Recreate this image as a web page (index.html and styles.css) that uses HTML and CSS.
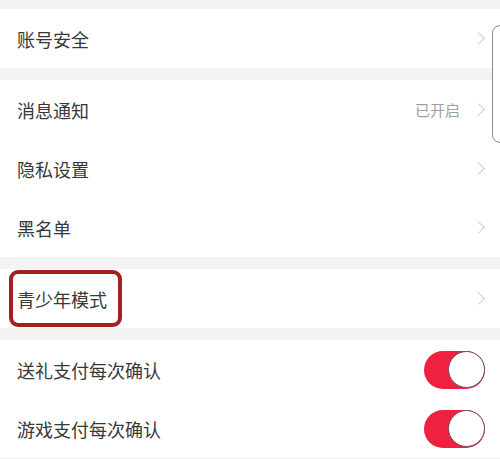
FILE: index.html
```html
<!DOCTYPE html>
<html lang="zh-CN">
<head>
  <meta charset="UTF-8" />
  <meta name="viewport" content="width=device-width, initial-scale=1.0"/>
  <title>设置</title>
  <link rel="stylesheet" href="styles.css">
</head>
<body>
  <div class="page">
    <div class="group">
      <div class="row">
        <span class="label">账号安全</span>
        <span class="chevron"></span>
      </div>
    </div>

    <div class="group">
      <div class="row">
        <span class="label">消息通知</span>
        <span class="value">已开启</span>
        <span class="chevron"></span>
      </div>
      <div class="row">
        <span class="label">隐私设置</span>
        <span class="chevron"></span>
      </div>
      <div class="row">
        <span class="label">黑名单</span>
        <span class="chevron"></span>
      </div>
    </div>

    <div class="group">
      <div class="row">
        <span class="label">青少年模式</span>
        <span class="chevron"></span>
        <div class="highlight"></div>
      </div>
    </div>

    <div class="group group-last">
      <div class="row">
        <span class="label">送礼支付每次确认</span>
        <span class="switch on"><span class="knob"></span></span>
      </div>
      <div class="row">
        <span class="label">游戏支付每次确认</span>
        <span class="switch on"><span class="knob"></span></span>
      </div>
    </div>

    <div class="edge"></div>
  </div>
</body>
</html>
```

FILE: styles.css
```css
body {
  margin: 0;
  background-color: #f3f3f3;
  font-family: "Noto Sans CJK SC", "Noto Sans", sans-serif;
  color: #333;
  overflow: hidden;
}
.page {
  position: relative;
  padding-top: 9px;
}
.group {
  background: #fff;
  margin-bottom: 12px;
}
.group-last {
  margin-bottom: 0;
}
.row {
  position: relative;
  display: flex;
  align-items: center;
  height: 59px;
  padding: 0 14px 0 17px;
}
.label {
  flex: 1;
  font-size: 18px;
  line-height: 1;
  color: #383838;
}
.value {
  font-size: 15px;
  color: #a0a0a0;
  margin-right: 14px;
}
.chevron {
  width: 8px;
  height: 8px;
  border-top: 1.5px solid #c9c9c9;
  border-right: 1.5px solid #c9c9c9;
  transform: rotate(45deg);
  margin-right: 3px;
}
.highlight {
  position: absolute;
  left: 9px;
  top: 1px;
  width: 105px;
  height: 49px;
  border: 4px solid #a3201f;
  border-radius: 9px;
  pointer-events: none;
}
.switch {
  position: relative;
  width: 61px;
  height: 38px;
  border-radius: 19px;
  background: #ef2141;
  margin-right: 1px;
}
.knob {
  position: absolute;
  right: 0;
  top: 0;
  width: 35px;
  height: 35px;
  border-radius: 50%;
  background: #fff;
  border: 1.5px solid #6e4a55;
}
.edge {
  position: absolute;
  left: 492px;
  top: 25px;
  width: 20px;
  height: 116px;
  border: 1px solid #8c8c8c;
  border-radius: 8px;
  background: #fff;
}
```
